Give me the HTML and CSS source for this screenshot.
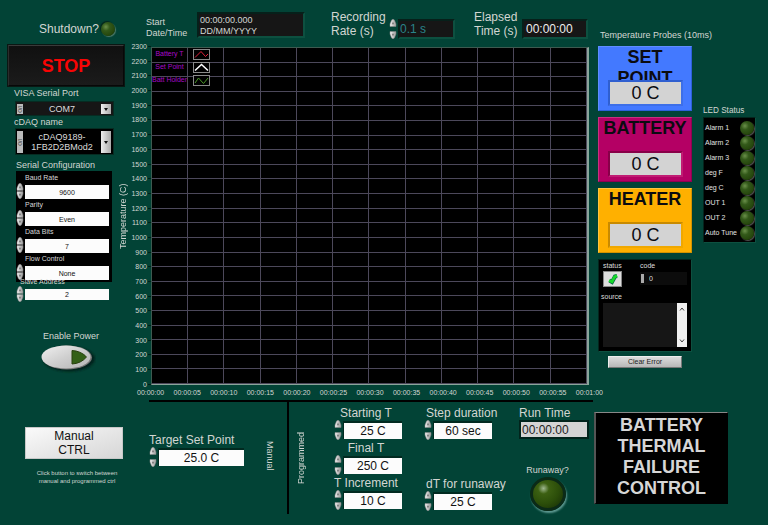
FILE: index.html
```html
<!DOCTYPE html>
<html lang="en">
<head>
<meta charset="utf-8">
<title>Battery Thermal Failure Control</title>
<link rel="stylesheet" href="styles.css">
</head>
<body>
<svg class="defs" aria-hidden="true">
  <linearGradient id="metal" x1="0" x2="1"><stop offset="0" stop-color="#f2f2f2"/><stop offset="1" stop-color="#9a9a9a"/></linearGradient>
  <symbol id="up" viewBox="0 0 8 8"><path d="M1 7.5V5L2.6 1Q4 -.3 5.4 1L7 5V7.5Z" fill="url(#metal)" stroke="#888" stroke-width=".5"/><path d="M2.8 5.2 4 2.6 5.2 5.2Z" fill="#777"/></symbol>
  <symbol id="down" viewBox="0 0 8 8"><path d="M1 .5V3L2.6 7Q4 8.3 5.4 7L7 3V.5Z" fill="url(#metal)" stroke="#888" stroke-width=".5"/><path d="M2.8 2.8 4 5.4 5.2 2.8Z" fill="#777"/></symbol>
</svg>
<main class="panel">
  <section class="side">
    <div class="shutdown"><span>Shutdown?</span><i class="led"></i></div>
    <button class="stop">STOP</button>

    <label class="lbl" for="visa">VISA Serial Port</label>
    <div class="combo">
      <span class="io">I/O</span>
      <select id="visa"><option>COM7</option></select>
      <span class="arrow"></span>
    </div>
    <label class="lbl" for="cdaq">cDAQ name</label>
    <div class="combo tall">
      <span class="io">I/O</span>
      <button id="cdaq" class="pick" aria-haspopup="listbox">cDAQ9189-<br>1FB2D2BMod2</button>
      <span class="arrow"></span>
    </div>

    <h2 class="lbl serial-title">Serial Configuration</h2>
    <div class="serial">
      <label for="baud">Baud Rate</label>
      <div class="num"><span class="spin"><button aria-label="Increase"><svg><use href="#up"/></svg></button><button aria-label="Decrease"><svg><use href="#down"/></svg></button></span><input id="baud" value="9600"></div>
      <label for="parity">Parity</label>
      <div class="num"><span class="spin"><button aria-label="Increase"><svg><use href="#up"/></svg></button><button aria-label="Decrease"><svg><use href="#down"/></svg></button></span><input id="parity" value="Even"></div>
      <label for="bits">Data Bits</label>
      <div class="num"><span class="spin"><button aria-label="Increase"><svg><use href="#up"/></svg></button><button aria-label="Decrease"><svg><use href="#down"/></svg></button></span><input id="bits" value="7"></div>
      <label for="flow">Flow Control</label>
      <div class="num"><span class="spin"><button aria-label="Increase"><svg><use href="#up"/></svg></button><button aria-label="Decrease"><svg><use href="#down"/></svg></button></span><input id="flow" value="None"></div>
    </div>
    <div class="slave">
      <label for="slave">Slave Address</label>
      <div class="num"><span class="spin"><button aria-label="Increase"><svg><use href="#up"/></svg></button><button aria-label="Decrease"><svg><use href="#down"/></svg></button></span><input id="slave" value="2"></div>
    </div>

    <div class="power">
      <label class="lbl" for="power">Enable Power</label>
      <button id="power" aria-pressed="false">
        <svg viewBox="0 0 56 30" width="56" height="30">
          <defs>
            <linearGradient id="cap" x1="0" y1="0" x2="1" y2="1"><stop offset="0" stop-color="#f0f0f0"/><stop offset=".5" stop-color="#cfcfcf"/><stop offset="1" stop-color="#b4b4b4"/></linearGradient>
            <filter id="soft"><feGaussianBlur stdDeviation="1.2"/></filter>
          </defs>
          <ellipse cx="29" cy="15" rx="26" ry="12.5" fill="#00231c" filter="url(#soft)"/>
          <ellipse cx="27" cy="13.5" rx="25" ry="12" fill="#777"/>
          <ellipse cx="26" cy="13" rx="24.5" ry="11.5" fill="url(#cap)"/>
          <path d="M32 6.5Q41 7 46.500 13Q41 19.500 32 20Z" fill="#336017" stroke="#28400f"/>
        </svg>
      </button>
    </div>

    <button class="ctrl">Manual<br>CTRL</button>
    <p class="hint">Click button to switch between<br>manual and programmed ctrl</p>
  </section>

  <section class="center">
    <header class="top">
      <div class="item">
        <label class="lbl start" for="start">Start<br>Date/Time</label>
        <output id="start" class="screen stamp">00:00:00.000<br>DD/MM/YYYY</output>
      </div>
      <div class="item">
        <label class="big" for="rate">Recording<br>Rate (s)</label>
        <div class="num dark"><span class="spin"><button aria-label="Increase"><svg><use href="#up"/></svg></button><button aria-label="Decrease"><svg><use href="#down"/></svg></button></span><input id="rate" value="0.1 s"></div>
      </div>
      <div class="item">
        <label class="big" for="elapsed">Elapsed<br>Time (s)</label>
        <output id="elapsed" class="screen clock">00:00:00</output>
      </div>
    </header>

    <figure class="chart">
      <span class="ytitle">Temperature (C)</span>
      <ol class="yaxis">
        <li>2300</li><li>2200</li><li>2100</li><li>2000</li><li>1900</li><li>1800</li><li>1700</li><li>1600</li><li>1500</li><li>1400</li><li>1300</li><li>1200</li><li>1100</li><li>1000</li><li>900</li><li>800</li><li>700</li><li>600</li><li>500</li><li>400</li><li>300</li><li>200</li><li>100</li><li>0</li>
      </ol>
      <div class="plot">
        <ul class="legend">
          <li><span>Battery T</span><svg viewBox="0 0 15 9"><path d="M1 7.500 7 1.500 11.500 6.500 14 4" stroke="#e0203a"/></svg></li>
          <li><span>Set Point</span><svg viewBox="0 0 15 9"><path d="M1 7.500 7.500 1.500 14 7.500" stroke="#fff" stroke-width="1.500"/></svg></li>
          <li><span>Batt Holder</span><svg viewBox="0 0 15 9"><path d="M1 7 4.500 2 9.500 7.500 14 2" stroke="#4c9a28"/></svg></li>
        </ul>
      </div>
      <ol class="xaxis">
        <li>00:00:00</li><li>00:00:05</li><li>00:00:10</li><li>00:00:15</li><li>00:00:20</li><li>00:00:25</li><li>00:00:30</li><li>00:00:35</li><li>00:00:40</li><li>00:00:45</li><li>00:00:50</li><li>00:00:55</li><li>00:01:00</li>
      </ol>
    </figure>

    <div class="modes">
      <section class="manual">
        <div class="field wide">
          <label class="big" for="target">Target Set Point</label>
          <div class="num"><span class="spin"><button aria-label="Increase"><svg><use href="#up"/></svg></button><button aria-label="Decrease"><svg><use href="#down"/></svg></button></span><input id="target" value="25.0 C"></div>
        </div>
        <h2 class="vert">Manual</h2>
      </section>
      <section class="prog">
        <h2 class="vert flip">Programmed</h2>
        <div class="stack mid">
          <div class="field"><label class="big" for="st">Starting T</label>
          <div class="num"><span class="spin"><button aria-label="Increase"><svg><use href="#up"/></svg></button><button aria-label="Decrease"><svg><use href="#down"/></svg></button></span><input id="st" value="25 C"></div></div>
          <div class="field"><label class="big" for="ft">Final T</label>
          <div class="num"><span class="spin"><button aria-label="Increase"><svg><use href="#up"/></svg></button><button aria-label="Decrease"><svg><use href="#down"/></svg></button></span><input id="ft" value="250 C"></div></div>
          <div class="field"><label class="big" for="ti">T Increment</label>
          <div class="num"><span class="spin"><button aria-label="Increase"><svg><use href="#up"/></svg></button><button aria-label="Decrease"><svg><use href="#down"/></svg></button></span><input id="ti" value="10 C"></div></div>
        </div>
        <div class="stack ends">
          <div class="field"><label class="big" for="sd">Step duration</label>
          <div class="num"><span class="spin"><button aria-label="Increase"><svg><use href="#up"/></svg></button><button aria-label="Decrease"><svg><use href="#down"/></svg></button></span><input id="sd" value="60 sec"></div></div>
          <div class="field"><label class="big" for="dt">dT for runaway</label>
          <div class="num"><span class="spin"><button aria-label="Increase"><svg><use href="#up"/></svg></button><button aria-label="Decrease"><svg><use href="#down"/></svg></button></span><input id="dt" value="25 C"></div></div>
        </div>
        <div class="stack ends">
          <div class="field"><label class="big" for="run">Run Time</label>
          <output id="run" class="runtime">00:00:00</output></div>
          <div class="runaway"><span class="lbl">Runaway?</span><i class="led large"></i></div>
        </div>
      </section>
    </div>
  </section>

  <section class="right">
    <h2 class="lbl">Temperature Probes (10ms)</h2>
    <div class="cols">
      <div class="probes">
        <div class="probe blue"><h3>SET POINT</h3><output>0 C</output></div>
        <div class="probe pink"><h3>BATTERY</h3><output>0 C</output></div>
        <div class="probe gold"><h3>HEATER</h3><output>0 C</output></div>
        <div class="error">
          <div class="errtop">
            <div><span>status</span><div class="ok"><svg viewBox="0 0 18 14" width="18" height="14"><path d="M5.500 8.500 8 10 11 4.500 13 4" fill="none" stroke="#064" stroke-width="4"/><path d="M5 8.500 8 9.800 10.500 5 13 3.500" fill="none" stroke="#17d92a" stroke-width="2.800"/></svg></div></div>
            <div><label for="code">code</label><div class="code"><i></i><input id="code" value="0"></div></div>
          </div>
          <label class="src" for="source">source</label>
          <div class="source">
            <textarea id="source"></textarea>
            <div class="bar">
              <svg viewBox="0 0 6 4"><path d="M1 3.500 3 1 5 3.500"/></svg>
              <svg viewBox="0 0 6 4"><path d="M1 .5 3 3 5 .5"/></svg>
            </div>
          </div>
        </div>
        <button class="clear">Clear Error</button>
      </div>
      <div class="leds">
        <h3>LED Status</h3>
        <ul>
          <li>Alarm 1<i class="led"></i></li>
          <li>Alarm 2<i class="led"></i></li>
          <li>Alarm 3<i class="led"></i></li>
          <li>deg F<i class="led"></i></li>
          <li>deg C<i class="led"></i></li>
          <li>OUT 1<i class="led"></i></li>
          <li>OUT 2<i class="led"></i></li>
          <li>Auto Tune<i class="led"></i></li>
        </ul>
      </div>
    </div>
    <h1>BATTERY<br>THERMAL<br>FAILURE<br>CONTROL</h1>
  </section>
</main>
</body>
</html>
```
FILE: styles.css
```css
* { box-sizing: border-box; }
body {
  margin: 0;
  background: #024336;
  color: #d2d6d2;
  font-family: "Liberation Sans", Arial, sans-serif;
  font-size: 7px;
  line-height: 8px;
}
h1, h2, h3, p, ol, ul, figure { margin: 0; padding: 0; list-style: none; font-weight: normal; }
button, input, select, textarea {
  font: inherit;
  color: inherit;
  border: 0;
  border-radius: 0;
  margin: 0;
  padding: 0;
  min-width: 0;
}
label { display: block; }
.defs { position: absolute; width: 0; height: 0; }

.panel {
  display: grid;
  grid-template-columns: 127px minmax(466px, 1fr) 175px;
  min-height: 100vh;
}
.lbl { font-size: 9px; line-height: 12px; }
.big { font-size: 12px; line-height: 14px; white-space: nowrap; }

/* indicator lamps */
.led {
  flex: none;
  width: 14px;
  height: 14px;
  border-radius: 50%;
  background: radial-gradient(circle at 35% 35%, #6a8f4a 0, #33591a 30%, #25460c 70%, #102206 100%);
  box-shadow: 1px 1px 1px #4f7a68, -1px -1px 1px #04251b;
}
.led.large {
  width: 36px;
  height: 34px;
  border: 3px solid #0b2a17;
  background: radial-gradient(circle at 35% 30%, #a0b890 0, #3c6012 20%, #2c4e0a 55%, #142a06 100%);
  box-shadow: 1px 2px 2px #5f9a92;
}

/* numeric control with increment arrows */
.num { display: flex; align-items: center; }
.num input {
  flex: 1;
  width: 0;
  height: 13px;
  background: #fcfcfc;
  color: #111;
  text-align: center;
}
.spin { flex: none; width: 9px; display: flex; flex-direction: column; }
.spin button { height: 8px; background: none; line-height: 0; }
.spin svg { display: block; width: 8px; height: 8px; }

/* left column */
.side { padding-top: 22px; }
.shutdown {
  display: flex;
  align-items: center;
  gap: 2px;
  padding-left: 39px;
  font-size: 12px;
  line-height: 14px;
}
.stop {
  display: block;
  width: 118px;
  height: 43px;
  margin: 8px 0 0 7px;
  border: 2px solid;
  border-color: #3a3a3a #080808 #080808 #2c2c2c;
  outline: 1px solid #0a1713;
  outline-offset: -1px;
  background: linear-gradient(#101010, #1b1b1b);
  color: #f80404;
  font-size: 18px;
  font-weight: bold;
}
.side > .lbl { margin-left: 14px; }
.combo {
  display: flex;
  margin: 2px 13px 0 15px;
  height: 15px;
  padding: 2px 2px 1px 1px;
  background: #161616;
  border: 1px solid #062c22;
  font-size: 9px;
}
.combo.tall { height: 27px; margin-top: 0; background: #000; }
.combo select, .combo .pick {
  flex: 1;
  appearance: none;
  background: none;
  text-align: center;
  text-align-last: center;
  line-height: 10px;
  color: #dcdcdc;
}
.io {
  width: 6px;
  background: #bbb;
  color: #333;
  writing-mode: vertical-rl;
  font-size: 5px;
  line-height: 6px;
  text-align: center;
}
.arrow {
  width: 10px;
  background: linear-gradient(90deg, #eee, #aaa);
  display: grid;
  place-items: center;
}
.arrow::after { content: ""; border: 2px solid transparent; border-top: 3px solid #111; border-bottom: 0; }

.side .serial-title { margin: 4px 0 0 16px; }
.serial {
  margin: 0 15px 0 16px;
  height: 111px;
  padding: 3px 3px 0 0;
  background: #000;
  display: grid;
  grid-template-columns: 1fr;
  grid-auto-rows: 11px 16px;
  color: #d8d8d8;
}
.serial label { padding-left: 9px; }
.serial .num { align-items: flex-start; }
.serial .num input { height: 14px; }
.serial .spin { margin-top: -2px; }
.slave { margin: -4px 18px 0 16px; position: relative; }
.slave label { padding-left: 4px; }
.slave .num input { height: 11px; }

.power { width: 114px; margin: 28px 0 0 14px; text-align: center; }
.power button { display: block; margin: 2px 0 0 26px; background: none; line-height: 0; }
.ctrl {
  display: block;
  width: 98px;
  height: 32px;
  margin: 53px 0 0 25px;
  background: linear-gradient(160deg, #fafafa, #d6d6d6);
  border: 1px solid #c8c8c8;
  color: #111;
  font-size: 12px;
  line-height: 14px;
}
.hint { width: 104px; margin: 10px 0 0 25px; text-align: center; font-size: 6px; }

/* centre column */
.center { display: flex; flex-direction: column; min-width: 0; }
.top {
  display: grid;
  grid-template-columns: 185fr 143fr 114fr;
  height: 47px;
  padding: 10px 5px 0 19px;
}
.item { display: flex; align-items: flex-start; }
.item .start { width: 51px; padding-top: 7px; line-height: 11px; }
.screen { background: #161616; border: 2px solid #06201a; border-right-color: #0d5040; border-bottom-color: #0d5040; }
.stamp { width: 108px; height: 26px; margin-top: 2px; padding: 1px; font-size: 9px; line-height: 11px; }
.item .big { width: 48px; }
.item:nth-child(2) .big { width: 58px; }
.clock { flex: 1; height: 20px; margin-top: 9px; padding-left: 2px; font-size: 12px; line-height: 16px; color: #eee; }
.num.dark { width: 66px; margin-top: 9px; }
.num.dark .spin, .modes .spin { gap: 4px; }
.num.dark input {
  height: 20px;
  background: #161616;
  border: 2px solid #06201a;
  border-right-color: #0d5040;
  border-bottom-color: #0d5040;
  color: #2a848a;
  font-size: 12px;
  text-align: left;
}

.chart {
  display: grid;
  grid-template: minmax(338px, auto) 8px / 10px 23px 1fr;
  row-gap: 4px;
  margin: 0 4px 3px -9px;
}
.ytitle {
  writing-mode: vertical-rl;
  transform: rotate(180deg);
  text-align: center;
  font-size: 9px;
  line-height: 10px;
}
.yaxis {
  display: flex;
  flex-direction: column;
  justify-content: space-between;
  margin: -4px 0;
  text-align: right;
}
.yaxis li::after {
  content: "";
  display: inline-block;
  width: 3px;
  height: 1px;
  margin-left: 1px;
  background: #012019;
  vertical-align: 2px;
}
.plot {
  border: 1px solid #3e5a50;
  border-bottom-color: #8ba49a;
  border-right: 2px solid #8ba49a;
  background:
    repeating-linear-gradient(to bottom, transparent 0 calc(100% / 23 - 1px), #4c485a calc(100% / 23 - 1px) calc(100% / 23)),
    repeating-linear-gradient(to right, transparent 0 calc(100% / 12 - 1px), #4c485a calc(100% / 12 - 1px) calc(100% / 12)),
    #000;
}
.legend { display: grid; gap: 1px; width: 58px; }
.legend li { display: grid; grid-template-columns: 1fr 17px; align-items: center; gap: 6px; height: 12px; }
.legend span { color: #a80ac8; text-align: center; white-space: nowrap; }
.legend svg { width: 17px; height: 11px; background: #000; border: 1px solid #8a8a8a; fill: none; }
.xaxis {
  grid-column: 3;
  display: flex;
  justify-content: space-between;
  margin: 0 -14px;
}

.modes {
  display: grid;
  grid-template-columns: minmax(0, 140fr) minmax(0, 304fr);
  margin-left: 22px;
  border-top: 2px solid #000;
}
.modes .num input { height: 18px; font-size: 12px; border: 1px solid #012a20; border-width: 2px 0 0 1px; }
.manual { display: grid; grid-template-columns: 1fr 34px; height: 112px; border-right: 2px solid #000; }
.wide { padding-top: 31px; }
.modes .num { height: 20px; }
.manual .num { width: 95px; }
.vert { writing-mode: vertical-rl; font-size: 9px; line-height: 10px; text-align: center; justify-self: center; }
.manual .vert { margin-bottom: 4px; }
.flip { transform: rotate(180deg); justify-self: start; margin-left: 7px; }
.prog { display: grid; grid-template-columns: 45fr 90fr 95fr 74fr; height: 112px; }
.stack { height: 105px; margin-top: 4px; display: flex; flex-direction: column; gap: 1px; }
.stack .num { width: 68px; }
.ends { justify-content: space-between; }
.ends .big { padding-left: 2px; }
.mid .big { width: 64px; text-align: center; }
.runtime {
  display: block;
  width: 70px;
  height: 19px;
  padding-left: 1px;
  border: 2px solid #01241c;
  background: #d4d4d4;
  color: #222;
  font-size: 12px;
  line-height: 16px;
}
.stack:last-child .big { padding-left: 0; }
.runaway { width: 57px; display: grid; justify-items: center; gap: 1px; }

/* right column */
.right { padding: 29px 12px 0 5px; }
.right > .lbl { margin-left: 2px; }
.cols { display: flex; gap: 11px; margin-top: 5px; }
.probes { width: 94px; }
.probe {
  position: relative;
  height: 65px;
  margin-bottom: 6px;
  border: 1px solid;
  color: #0b0b10;
  text-align: center;
}
.probe h3 { font-size: 18px; line-height: 21px; font-weight: bold; }
.probe output {
  position: absolute;
  left: 9px;
  right: 8px;
  bottom: 4px;
  height: 26px;
  border: 2px solid;
  background: #d3d3d3;
  font-size: 18px;
  line-height: 22px;
}
.blue { background: #4379ff; border-color: #5f8dff #2f5fd8 #2f5fd8 #5f8dff; }
.pink { background: #b40064; border-color: #c83080 #900050 #900050 #c83080; }
.gold { background: #ffb000; border-color: #ffc440 #d49200 #d49200 #ffc440; }
.blue output { border-color: #2f5fd0 #3d6fe8 #3d6fe8 #2f5fd0; }
.pink output { border-color: #880048 #c01c74 #c01c74 #880048; }
.gold output { border-color: #c88a00 #f0a800 #f0a800 #c88a00; }

.error { height: 93px; padding: 2px 4px; background: #000; border: 1px solid #04251d; border-right-color: #0d5040; border-bottom-color: #0d5040; color: #ddd; }
.errtop { display: grid; grid-template-columns: 37px 1fr; }
.ok { width: 19px; height: 16px; margin-top: 1px; border: 1px solid #888; background: #ddd; line-height: 0; }
.ok svg { display: block; }
.code { display: flex; gap: 5px; align-items: center; height: 13px; margin-top: 2px; padding-left: 1px; background: #0c0c0c; }
.code i { width: 3px; height: 9px; background: #aaa; }
.code input { flex: 1; width: 0; background: none; }
.src { margin-top: 6px; margin-left: -2px; }
.source { display: flex; height: 44px; margin-top: 2px; }
.source textarea { flex: 1; background: #161616; resize: none; }
.bar { width: 10px; background: #f0f0f0; display: flex; flex-direction: column; justify-content: space-between; align-items: center; padding: 4px 0; }
.bar svg { width: 6px; height: 4px; fill: none; stroke: #444; }
.clear {
  display: block;
  width: 74px;
  height: 12px;
  margin: 4px 0 0 10px;
  background: linear-gradient(#dcdcdc, #b8b8b8);
  border: 1px solid;
  border-color: #eee #777 #777 #eee;
  color: #222;
}

.leds { margin-top: 61px; width: 55px; }
.leds h3 { white-space: nowrap; }
.leds ul { margin-top: 2px; padding: 2px 1px; background: #000; border: 1px solid #04251d; border-right-color: #0d5040; border-bottom-color: #0d5040; color: #e2e2e2; }
.leds li { display: flex; justify-content: space-between; align-items: center; height: 15px; white-space: nowrap; }
.leds .led { box-shadow: 1px 1px 1px #555; width: 14px; height: 14px; }

h1 {
  width: 134px;
  margin: 44px 0 0 -4px;
  padding: 2px 0 4px;
  background: #000;
  border: 1px solid #000;
  border-top-color: #888;
  border-left: 2px solid #555;
  color: #d6d6d6;
  font-size: 18px;
  font-weight: bold;
  line-height: 21px;
  text-align: center;
}
```
